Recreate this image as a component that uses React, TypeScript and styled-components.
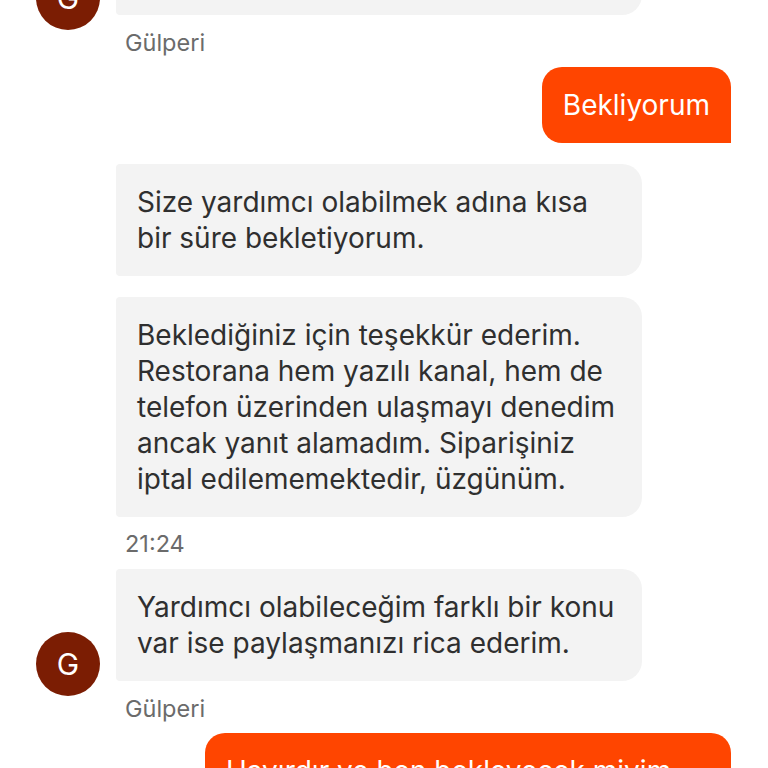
import styled, { createGlobalStyle } from "styled-components";

const GlobalStyle = createGlobalStyle`
	body {
		margin: 0;
		background: #ffffff;
		font-family: Inter, "Noto Sans", "Liberation Sans", sans-serif;
	}
`;

const Screen = styled.div`
	width: 768px;
	height: 768px;
	overflow: hidden;
	background: #ffffff;
`;

// list is scrolled, so the first bubble sits partly above the top edge
const Thread = styled.div`
	display: flex;
	flex-direction: column;
	padding: 0 37px 0 36px;
	margin-top: -61px;
`;

const AgentGroup = styled.div`
	display: flex;
	align-items: flex-end;
	gap: 16px;
`;

const Avatar = styled.div`
	flex: 0 0 64px;
	height: 64px;
	border-radius: 50%;
	background: #7b1d03;
	color: #ffffff;
	display: flex;
	align-items: center;
	justify-content: center;
	font-size: 30px;
	margin-bottom: 27px;
`;

const Stack = styled.div`
	display: flex;
	flex-direction: column;
	align-items: flex-start;
`;

const Bubble = styled.div<{ $mine?: boolean; $space?: number }>`
	max-width: 526px;
	box-sizing: border-box;
	padding: 20px 21px;
	font-size: 28px;
	line-height: 36px;
	margin-top: ${(p) => p.$space ?? 0}px;
	background: ${(p) => (p.$mine ? "#ff4500" : "#f3f3f3")};
	color: ${(p) => (p.$mine ? "#ffffff" : "#2f2f2f")};
	border-radius: ${(p) => (p.$mine ? "20px 20px 0 20px" : "4px 20px 20px 4px")};
	width: ${(p) => (p.$mine ? "fit-content" : "526px")};
`;

const Meta = styled.div<{ $space: number }>`
	margin-top: ${(p) => p.$space}px;
	padding-left: 9px;
	font-size: 23.5px;
	line-height: 28px;
	color: #6b6b6b;
`;

const MineRow = styled.div<{ $space: number }>`
	display: flex;
	justify-content: flex-end;
	margin-top: ${(p) => p.$space}px;
`;

export default function App() {
	return (
		<Screen>
			<GlobalStyle />
			<Thread>
				<AgentGroup>
					<Avatar>G</Avatar>
					<Stack>
						<Bubble>Siparişinizi kontrol ediyorum.</Bubble>
						<Meta $space={14}>Gülperi</Meta>
					</Stack>
				</AgentGroup>

				<MineRow $space={10}>
					<Bubble $mine>Bekliyorum</Bubble>
				</MineRow>

				<AgentGroup>
					<Avatar>G</Avatar>
					<Stack>
						<Bubble $space={21}>
							Size yardımcı olabilmek adına kısa bir süre bekletiyorum.
						</Bubble>
						<Bubble $space={21}>
							Beklediğiniz için teşekkür ederim. Restorana hem yazılı kanal, hem de
							telefon üzerinden ulaşmayı denedim ancak yanıt alamadım. Siparişiniz
							iptal edilememektedir, üzgünüm.
						</Bubble>
						<Meta $space={13}>21:24</Meta>
						<Bubble $space={11}>
							Yardımcı olabileceğim farklı bir konu var ise paylaşmanızı rica ederim.
						</Bubble>
						<Meta $space={14}>Gülperi</Meta>
					</Stack>
				</AgentGroup>

				<MineRow $space={10}>
					<Bubble $mine>Hayırdır ve ben bekleyecek miyim bu kadar?</Bubble>
				</MineRow>
			</Thread>
		</Screen>
	);
}
